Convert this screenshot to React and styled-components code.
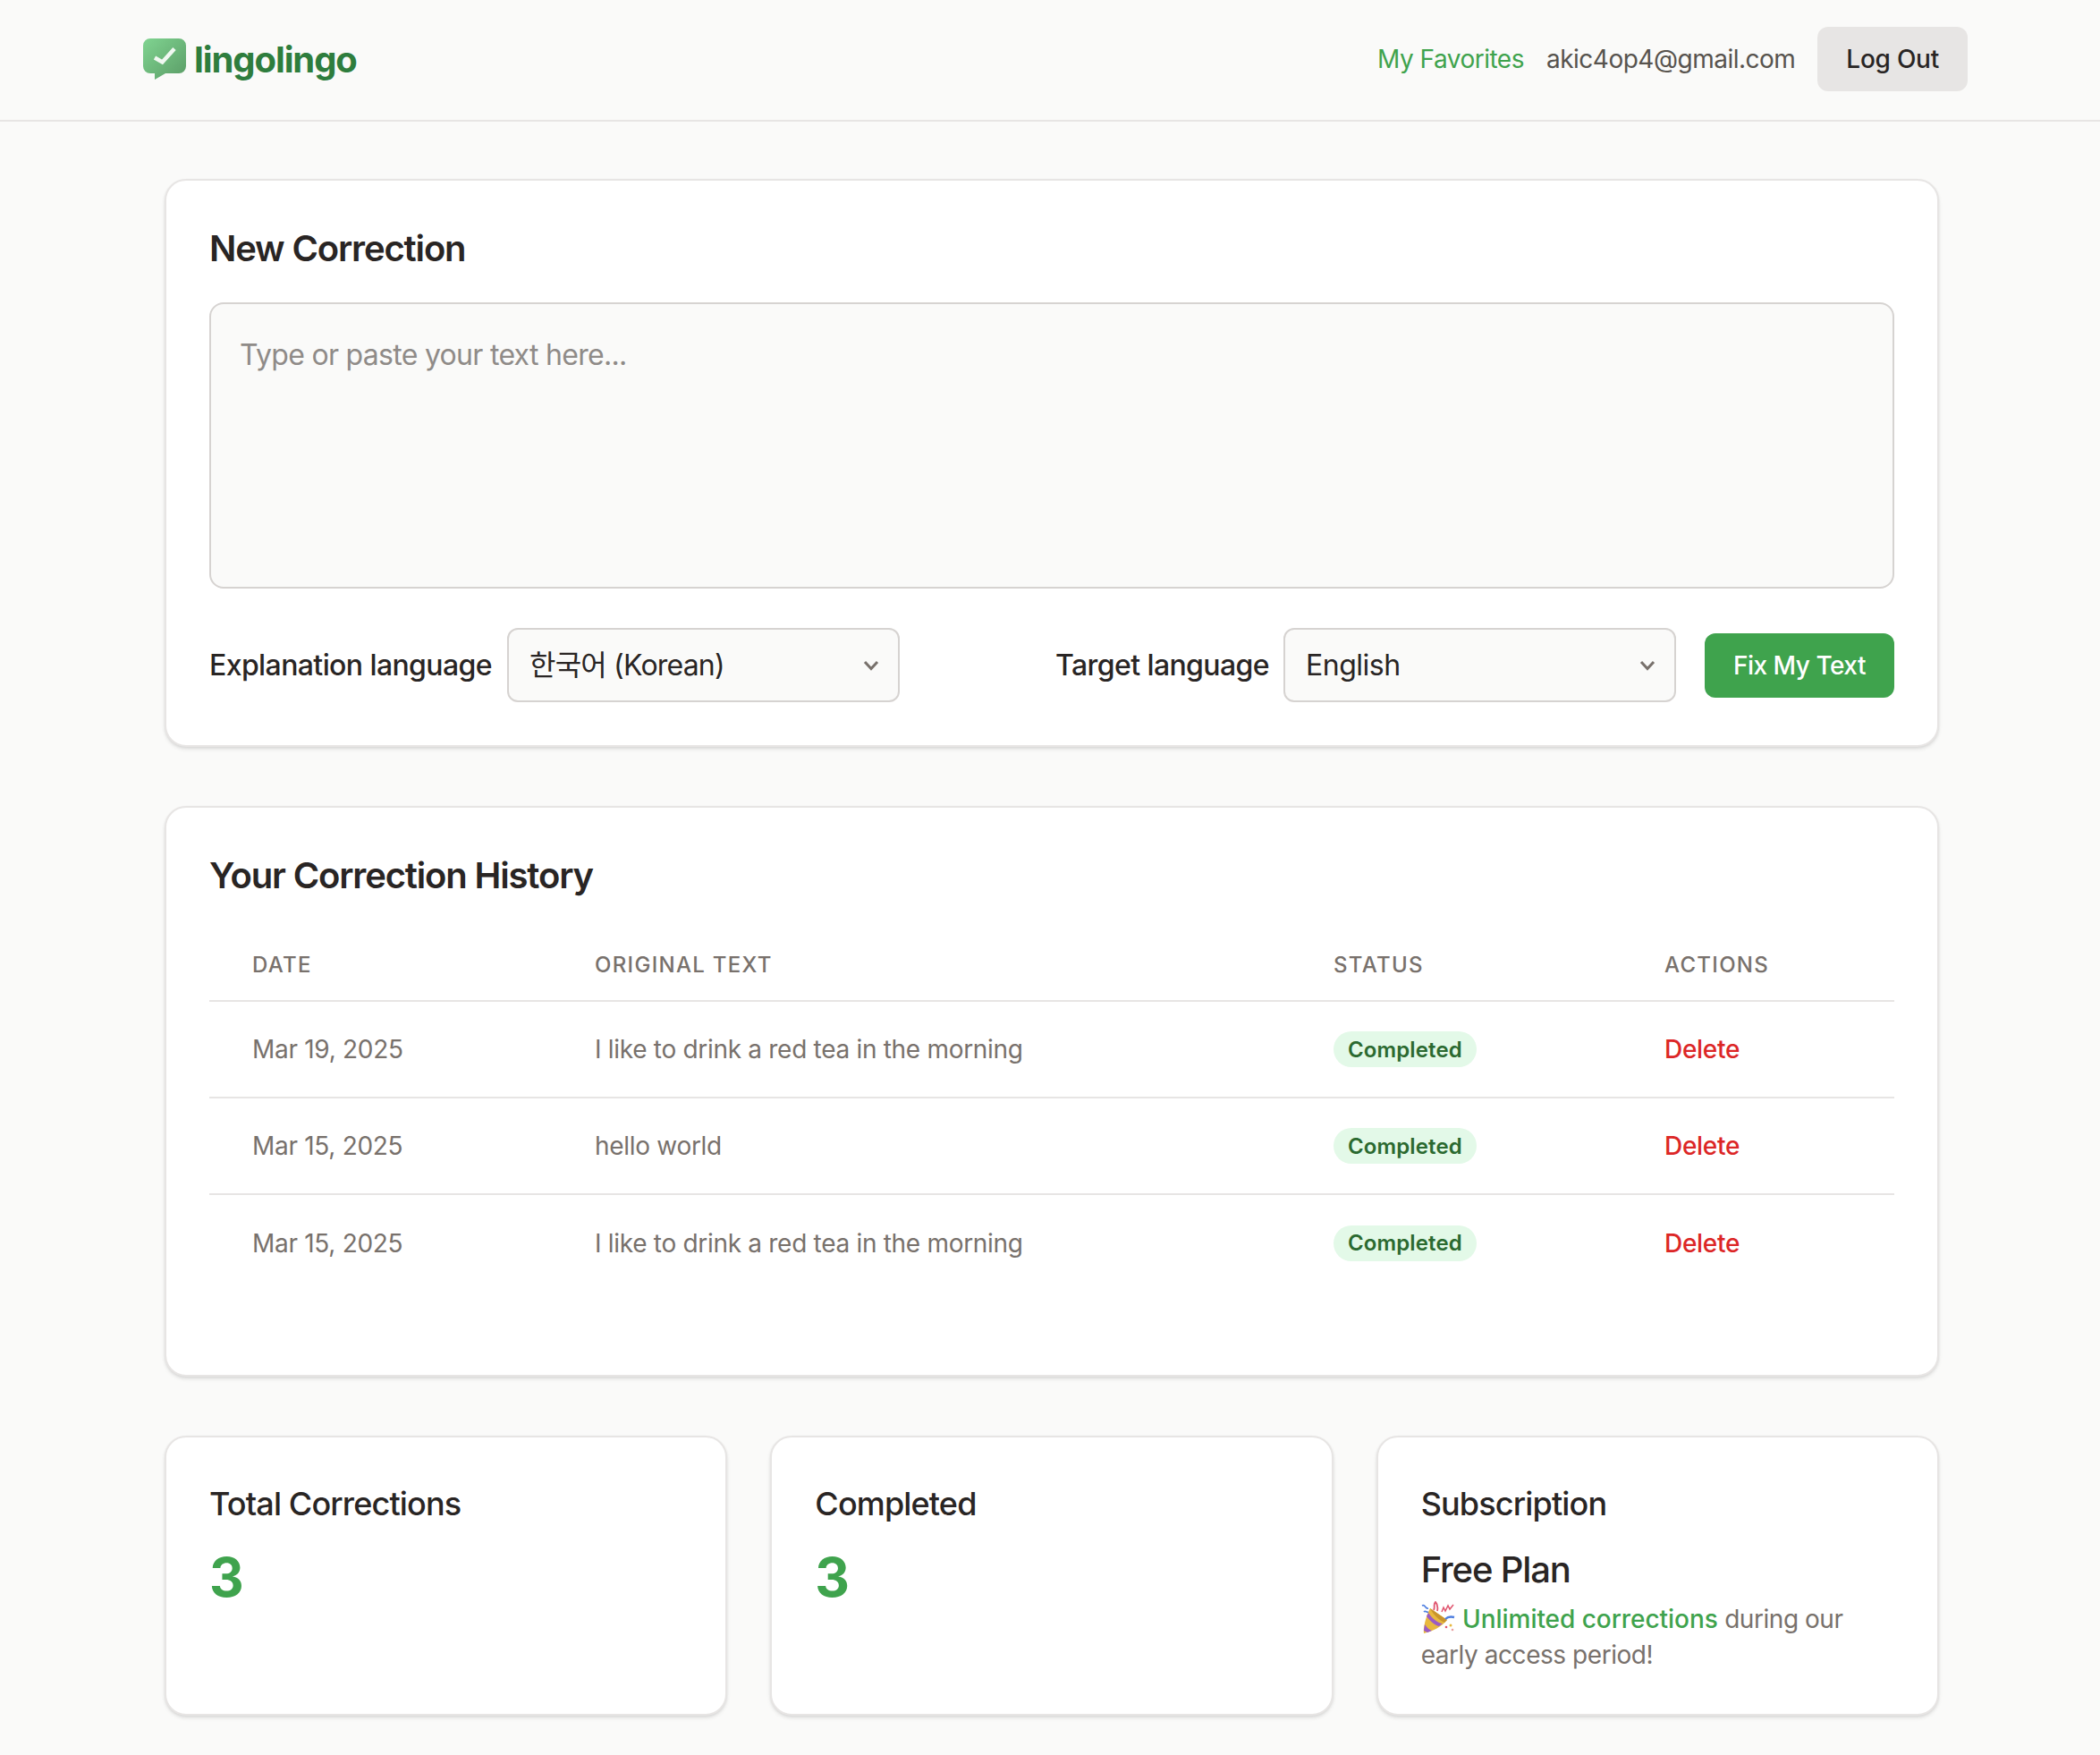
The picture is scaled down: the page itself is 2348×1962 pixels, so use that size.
import React from 'react'
import styled, { createGlobalStyle } from 'styled-components'

const GlobalStyle = createGlobalStyle`
  * { box-sizing: border-box; }
  body {
    margin: 0;
    background: #fafaf9;
    color: #292524;
    font-family: Inter, "Noto Sans CJK KR", sans-serif;
  }
`;

const Header = styled.header`
  height: 136px;
  border-bottom: 2px solid #e7e5e4;
  padding: 0 148px 2px 160px;
  display: flex;
  align-items: center;
  justify-content: space-between;
`;

const Logo = styled.a`
  display: flex;
  align-items: center;
  gap: 9px;
  font-size: 40px;
  font-weight: 700;
  letter-spacing: -1.1px;
  color: #2e7d3d;
  text-decoration: none;
`;

const Nav = styled.nav`
  display: flex;
  align-items: center;
  gap: 25px;
  font-size: 28px;
  letter-spacing: -0.5px;
`;

const FavLink = styled.a`
  color: #3fa34d;
  text-decoration: none;
`;

const Email = styled.span`
  color: #57534e;
`;

const Button = styled.button`
  height: 72px;
  padding: 0 32px;
  border: none;
  border-radius: 12px;
  font: 500 28px Inter, sans-serif;
  letter-spacing: ${props => props.$primary ? '-0.5px' : '-0.25px'};
  background: ${props => props.$primary ? '#3fa34d' : '#e7e5e4'};
  color: ${props => props.$primary ? '#fff' : '#292524'};
  cursor: pointer;
`;

const Main = styled.main`
  width: 1984px;
  margin-left: 184px;
  padding: 64px 0 44px;
  display: flex;
  flex-direction: column;
  gap: 66px;
`;

const Card = styled.section`
  background: #fff;
  border: 2px solid #e7e5e4;
  border-radius: 24px;
  padding: 48px;
  box-shadow: 0 3px 5px -1px rgba(0, 0, 0, 0.12), 0 1px 3px rgba(0, 0, 0, 0.06);
`;

const Title = styled.h2`
  margin: 0 0 33px;
  font-size: 40px;
  line-height: 55px;
  font-weight: 600;
  letter-spacing: -1.15px;
  color: #292524;
`;

const TextArea = styled.textarea`
  display: block;
  width: 100%;
  height: 320px;
  padding: 33px 32px;
  background: #fafaf9;
  border: 2px solid #d6d3d1;
  border-radius: 16px;
  font: 32px/48px Inter, sans-serif;
  letter-spacing: -0.7px;
  resize: none;
  outline: none;

  &::placeholder { color: #8f8b88; }
`;

const Controls = styled.div`
  margin-top: 44px;
  display: flex;
  align-items: center;
  justify-content: space-between;
`;

const Group = styled.div`
  display: flex;
  align-items: center;
  gap: ${props => props.$gap || 16}px;
`;

const Label = styled.label`
  font-size: 32px;
  font-weight: 500;
  letter-spacing: -0.6px;
  color: #292524;
`;

const SelectWrap = styled.div`
  position: relative;
  width: 439px;
  height: 83px;

  svg {
    position: absolute;
    right: 23px;
    top: 36px;
    pointer-events: none;
  }
`;

const Select = styled.select`
  appearance: none;
  width: 100%;
  height: 100%;
  padding: 0 56px 0 23px;
  background: #fafaf9;
  border: 2px solid #d6d3d1;
  border-radius: 12px;
  font: 32px Inter, "Noto Sans CJK KR", sans-serif;
  letter-spacing: ${props => props.$spacing}px;
  color: #292524;
`;

const Table = styled.table`
  width: 100%;
  border-collapse: collapse;
  table-layout: fixed;
  margin-bottom: 46px;
`;

const Th = styled.th`
  width: ${props => props.$w}px;
  height: 80px;
  padding: 0 0 0 48px;
  text-align: left;
  font-size: 24px;
  font-weight: 500;
  letter-spacing: 1.3px;
  text-transform: uppercase;
  color: #78716c;
  border-bottom: 2px solid #e7e5e4;
`;

const Td = styled.td`
  height: 108px;
  padding: 0 0 0 48px;
  font-size: 28px;
  letter-spacing: -0.3px;
  color: #78716c;
  border-bottom: ${props => props.$last ? 'none' : '2px solid #e7e5e4'};
`;

const Pill = styled.span`
  display: inline-flex;
  align-items: center;
  height: 40px;
  padding: 0 16px;
  border-radius: 20px;
  background: #e3f9e8;
  color: #2b6a30;
  font-size: 24px;
  font-weight: 600;
  letter-spacing: 0.12px;
`;

const DeleteLink = styled.a`
  color: #dc2626;
  font-weight: 450;
`;

const StatGrid = styled.div`
  display: grid;
  grid-template-columns: repeat(3, 1fr);
  gap: 48px;
`;

const StatCard = styled(Card)`
  height: 313px;
`;

const StatTitle = styled.h3`
  margin: 0 0 19px;
  font-size: 36px;
  line-height: 53px;
  font-weight: 500;
  letter-spacing: -0.85px;
  color: #292524;
`;

const StatValue = styled.div`
  font-size: 60px;
  line-height: 72px;
  font-weight: 700;
  color: #3fa34d;
`;

const PlanName = styled.div`
  margin-top: -15px;
  padding-top: 18px;
  font-size: 40px;
  line-height: 50px;
  font-weight: 500;
  letter-spacing: -1.15px;
  color: #292524;
`;

const PlanNote = styled.p`
  margin: 10px 0 0;
  font-size: 28px;
  line-height: 40px;
  letter-spacing: -0.45px;
  color: #78716c;

  svg {
    vertical-align: -6px;
    margin-right: 1px;
  }

  strong {
    color: #3fa34d;
    font-weight: 500;
    letter-spacing: -0.05px;
  }
`;

const LogoMark = () => (
    <svg width="48" height="46" viewBox="0 0 48 46">
        <defs>
            <linearGradient id="logoGrad" x1="0" y1="0" x2="1" y2="1">
                <stop offset="0" stopColor="#80d491" />
                <stop offset="1" stopColor="#5a9c66" />
            </linearGradient>
        </defs>
        <path
            d="M8 0H40a8 8 0 0 1 8 8V31a8 8 0 0 1-8 8H25L13 46V39H8a8 8 0 0 1-8-8V8a8 8 0 0 1 8-8Z"
            fill="url(#logoGrad)"
        />
        <path d="M13 21.5L21.5 26.5L35 11.5" fill="none" stroke="#f1f8f2" strokeWidth="4.5" />
    </svg>
);

const Chevron = () => (
    <svg width="18" height="12" viewBox="0 0 18 12">
        <path d="M2 2L9 9.5L16 2" fill="none" stroke="#78716c" strokeWidth="3" />
    </svg>
);

const PartyPopper = () => (
    <svg width="38" height="36" viewBox="0 0 38 36" role="img" aria-label="party popper">
        <path d="M10 8L29 21C24 28 12 34 3 36C2 30 5 18 10 8Z" fill="#e8b83e" />
        <path d="M8 13C12 19 19 25 24 25L20 28C15 27 9 21 6 17Z" fill="#9a5bc4" />
        <path d="M4 26C7 30 9 32 12 33L7 35L3 33Z" fill="#9a5bc4" />
        <path d="M10 8L29 21L26 24C20 21 13 15 10 8Z" fill="#c9942c" />
        <path d="M1 5C5 3 4 9 8 8M3 12C5 10 6 13 8 12" fill="none" stroke="#4f7fe0" strokeWidth="1.6" />
        <path d="M14 10C16 6 13 4 16 1C18 3 19 6 18 11" fill="none" stroke="#e0566f" strokeWidth="1.8" />
        <path d="M23 12L25 7L27 11L30 5L32 9L36 4" fill="none" stroke="#e0566f" strokeWidth="1.5" />
        <path d="M27 20C30 17 33 17 37 18" fill="none" stroke="#4f7fe0" strokeWidth="2.4" />
        <circle cx="33" cy="27" r="1.5" fill="#e8b83e" />
        <circle cx="28" cy="29" r="1.3" fill="#e0566f" />
        <circle cx="35" cy="32" r="1.3" fill="#e8a0a0" />
    </svg>
);

const rows = [
    { date: 'Mar 19, 2025', text: 'I like to drink a red tea in the morning' },
    { date: 'Mar 15, 2025', text: 'hello world' },
    { date: 'Mar 15, 2025', text: 'I like to drink a red tea in the morning' },
];

const App = () => {
    return (
        <>
            <GlobalStyle />
            <Header>
                <Logo href="#"><LogoMark /> lingolingo</Logo>
                <Nav>
                    <FavLink href="#">My Favorites</FavLink>
                    <Email>akic4op4@gmail.com</Email>
                    <Button>Log Out</Button>
                </Nav>
            </Header>
            <Main>
                <Card>
                    <Title>New Correction</Title>
                    <TextArea placeholder="Type or paste your text here..." />
                    <Controls>
                        <Group $gap={17}>
                            <Label>Explanation language</Label>
                            <SelectWrap>
                                <Select defaultValue="ko" $spacing={-0.8}>
                                    <option value="ko">한국어 (Korean)</option>
                                    <option value="en">English</option>
                                </Select>
                                <Chevron />
                            </SelectWrap>
                        </Group>
                        <Group $gap={32}>
                            <Group>
                                <Label>Target language</Label>
                                <SelectWrap>
                                    <Select defaultValue="en" $spacing={-0.5}>
                                        <option value="en">English</option>
                                        <option value="ko">한국어 (Korean)</option>
                                    </Select>
                                    <Chevron />
                                </SelectWrap>
                            </Group>
                            <Button $primary>Fix My Text</Button>
                        </Group>
                    </Controls>
                </Card>

                <Card>
                    <Title>Your Correction History</Title>
                    <Table>
                        <thead>
                            <tr>
                                <Th $w={383}>Date</Th>
                                <Th $w={826}>Original Text</Th>
                                <Th $w={370}>Status</Th>
                                <Th>Actions</Th>
                            </tr>
                        </thead>
                        <tbody>
                            {rows.map((row, i) => (
                                <tr key={i}>
                                    <Td $last={i === rows.length - 1}>{row.date}</Td>
                                    <Td $last={i === rows.length - 1}>{row.text}</Td>
                                    <Td $last={i === rows.length - 1}><Pill>Completed</Pill></Td>
                                    <Td $last={i === rows.length - 1}><DeleteLink>Delete</DeleteLink></Td>
                                </tr>
                            ))}
                        </tbody>
                    </Table>
                </Card>

                <StatGrid>
                    <StatCard>
                        <StatTitle>Total Corrections</StatTitle>
                        <StatValue>3</StatValue>
                    </StatCard>
                    <StatCard>
                        <StatTitle>Completed</StatTitle>
                        <StatValue>3</StatValue>
                    </StatCard>
                    <StatCard>
                        <StatTitle>Subscription</StatTitle>
                        <PlanName>Free Plan</PlanName>
                        <PlanNote>
                            <PartyPopper /> <strong>Unlimited corrections</strong> during our early access period!
                        </PlanNote>
                    </StatCard>
                </StatGrid>
            </Main>
        </>
    )
}

export default App
